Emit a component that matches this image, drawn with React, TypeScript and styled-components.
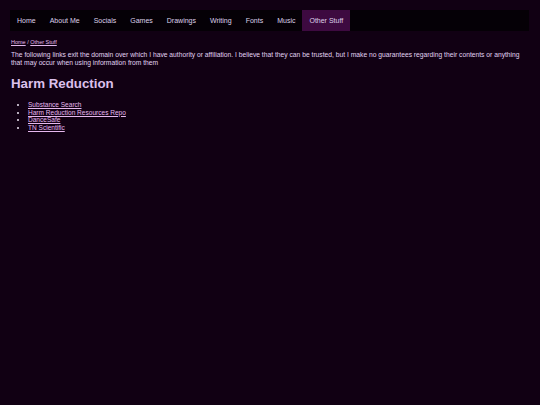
import React from "react";
import styled, { createGlobalStyle } from "styled-components";

const Global = createGlobalStyle`
  html, body { margin: 0; padding: 0; background: #110013; }
  body { font-family: "Liberation Sans", Arial, sans-serif; color: #d9c8ee; }
`;

const Page = styled.div`
  padding: 10px 11px 10px 10px;
  min-height: 385px;
`;

const Nav = styled.nav`
  display: flex;
  background: #050006;
  height: 21px;
`;

const NavItem = styled.a<{ $active?: boolean }>`
  display: flex;
  align-items: center;
  padding: 0 7px;
  font-size: 7px;
  color: #ddd0ea;
  text-decoration: none;
  background: ${(p) => (p.$active ? "#3d0a40" : "transparent")};
`;

const Content = styled.main`
  padding: 0 1px;
`;

const Crumbs = styled.div`
  margin-top: 8px;
  font-size: 5.5px;
  line-height: 7px;
  color: #d9c8ee;
`;

const CrumbLink = styled.a`
  color: #e2b8ec;
  text-decoration: underline;
`;

const Para = styled.p`
  margin: 5px 0 0;
  font-size: 6.72px;
  line-height: 8px;
  color: #e0d2f2;
`;

const Heading = styled.h1`
  margin: 8px 0 0;
  font-size: 13.3px;
  line-height: 17px;
  font-weight: bold;
  color: #dcc0ec;
`;

const List = styled.ul`
  margin: 9px 0 0;
  padding-left: 17px;
  font-size: 6.55px;
  line-height: 7.7px;
  color: #ece4f4;
`;

const LinkItem = styled.a`
  color: #e6b8ee;
  text-decoration: underline;
`;

const navItems = ["Home", "About Me", "Socials", "Games", "Drawings", "Writing", "Fonts", "Music", "Other Stuff"];
const links = ["Substance Search", "Harm Reduction Resources Repo", "DanceSafe", "TN Scientific"];

export default function App() {
  return (
    <>
      <Global />
      <Page>
        <Nav>
          {navItems.map((n) => (
            <NavItem key={n} $active={n === "Other Stuff"}>{n}</NavItem>
          ))}
        </Nav>
        <Content>
          <Crumbs>
            <CrumbLink>Home</CrumbLink> / <CrumbLink>Other Stuff</CrumbLink>
          </Crumbs>
          <Para>
            The following links exit the domain over which I have authority or affiliation. I believe that they can be trusted, but I make no guarantees regarding their contents or anything that may occur when using information from them
          </Para>
          <Heading>Harm Reduction</Heading>
          <List>
            {links.map((l) => (
              <li key={l}><LinkItem>{l}</LinkItem></li>
            ))}
          </List>
        </Content>
      </Page>
    </>
  );
}
